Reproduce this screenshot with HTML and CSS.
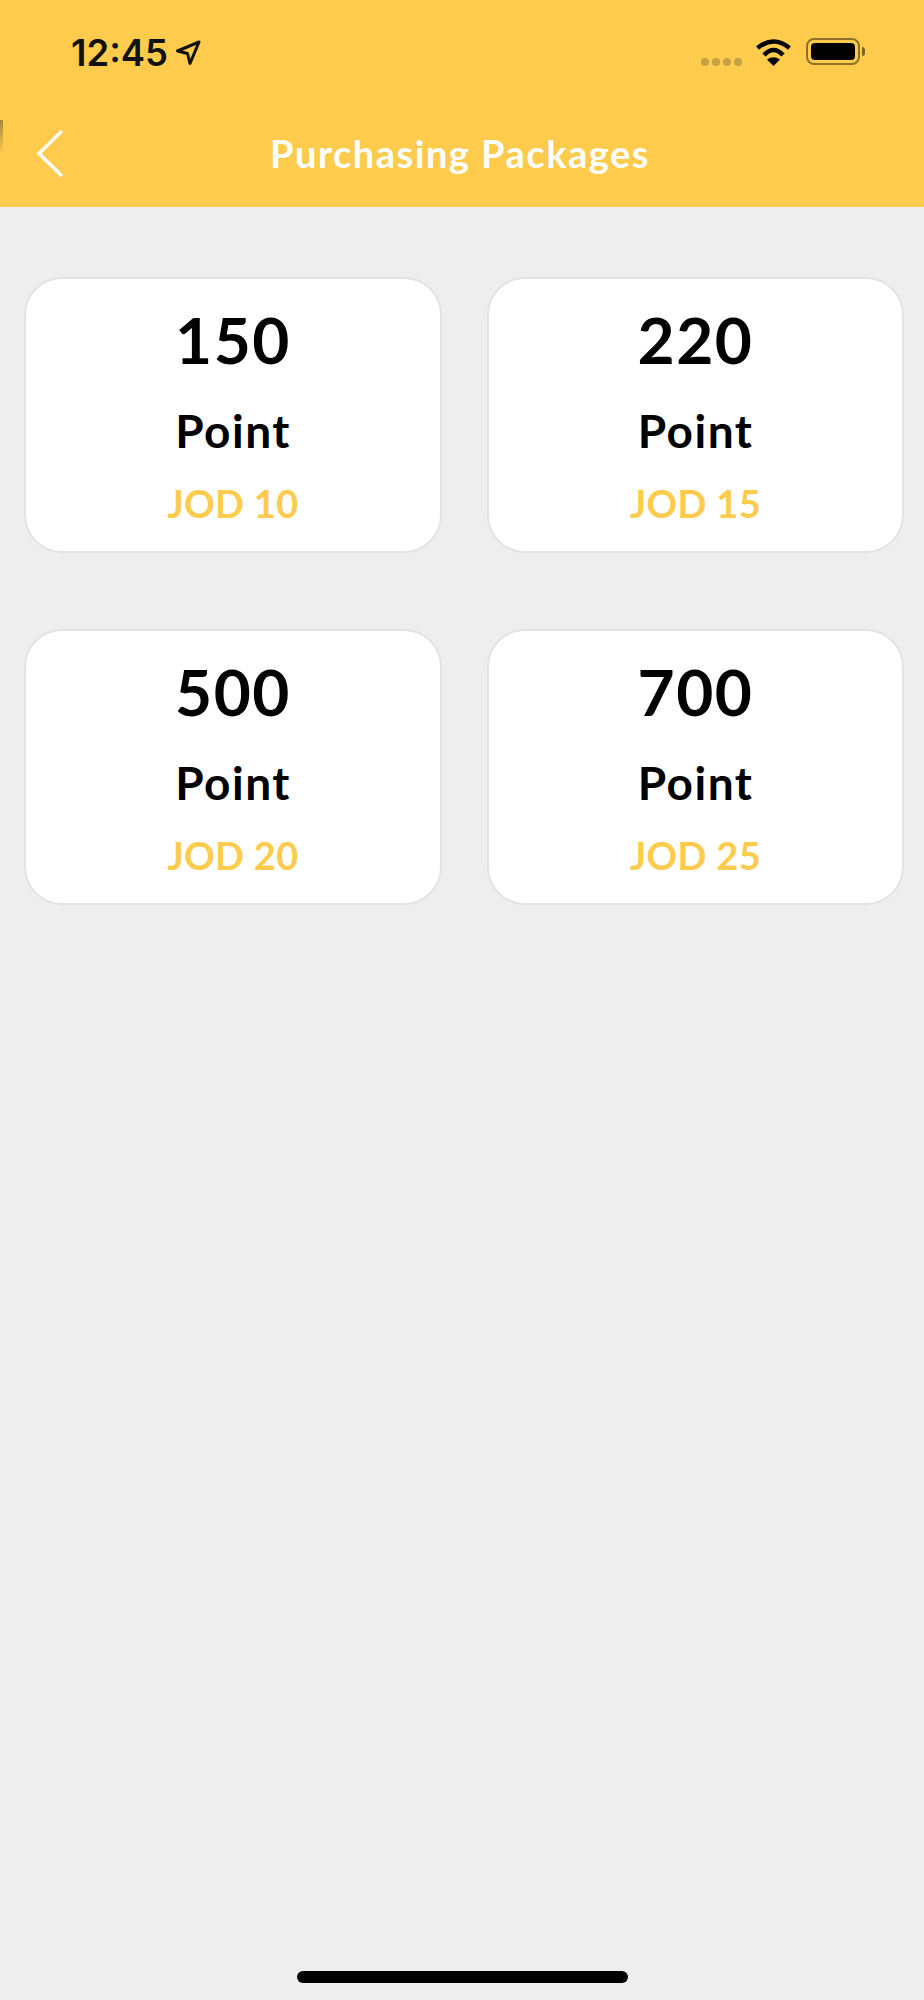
FILE: index.html
```html
<!DOCTYPE html>
<html lang="en">
<head>
    <meta charset="UTF-8">
    <meta name="viewport" content="width=device-width, initial-scale=1.0">
    <title>Purchasing Packages</title>
    <link rel="stylesheet" href="styles.css">
</head>
<body>
    <div class="page">
        <header class="header">
            <div class="status-bar">
                <div class="status-left">
                    <span class="time">12:45</span>
                    <svg class="location" width="26" height="26" viewBox="0 0 26 26">
                        <path d="M24 2 2.500 11 12.500 13.500 15 23.500Z" fill="none" stroke="#111" stroke-width="3" stroke-linejoin="round"/>
                    </svg>
                </div>
                <div class="status-right">
                    <div class="signal">
                        <i></i><i></i><i></i><i></i>
                    </div>
                    <svg class="wifi" width="37" height="28" viewBox="0 0 37 28">
                        <path d="M18.500 28 12 21.500Q18.500 17 25 21.500Z" fill="#000"/>
                        <path d="M9 17Q18.500 7 28 17" fill="none" stroke="#000" stroke-width="4.500"/>
                        <path d="M2.500 10Q18.500 -3 34.500 10" fill="none" stroke="#000" stroke-width="4.500"/>
                    </svg>
                    <div class="battery">
                        <div class="battery-body"><div class="battery-level"></div></div>
                        <div class="battery-cap"></div>
                    </div>
                </div>
            </div>
            <div class="nav-bar">
                <svg class="back" width="30" height="50" viewBox="0 0 30 50">
                    <path d="M27 3 4 25.500 27 48" fill="none" stroke="#fff" stroke-width="3.500"/>
                </svg>
                <h1 class="title">Purchasing Packages</h1>
            </div>
            <div class="edge-mark"></div>
        </header>

        <main class="packages">
            <div class="card">
                <div class="points">150</div>
                <div class="unit">Point</div>
                <div class="price">JOD 10</div>
            </div>
            <div class="card">
                <div class="points">220</div>
                <div class="unit">Point</div>
                <div class="price">JOD 15</div>
            </div>
            <div class="card">
                <div class="points">500</div>
                <div class="unit">Point</div>
                <div class="price">JOD 20</div>
            </div>
            <div class="card">
                <div class="points">700</div>
                <div class="unit">Point</div>
                <div class="price">JOD 25</div>
            </div>
        </main>

        <div class="home-bar"></div>
    </div>
</body>
</html>
```

FILE: styles.css
```css
* {
  box-sizing: border-box;
}
body {
  margin: 0;
  background: #eee;
  font-family: "Lato", "Open Sans", sans-serif;
}
.page {
  height: 2000px;
  display: flex;
  flex-direction: column;
}
.header {
  position: relative;
  height: 207px;
  background: #ffcb4c;
  flex-shrink: 0;
}

/* status bar */
.status-bar {
  height: 102px;
  padding: 30px 59px 0 71px;
  display: flex;
  justify-content: space-between;
  align-items: flex-start;
}
.status-left {
  display: flex;
  align-items: center;
  gap: 7px;
  padding-top: 1px;
}
.time {
  font-family: "Inter", sans-serif;
  font-size: 36.500px;
  font-weight: 600;
  line-height: 44px;
  color: #111;
}
.status-right {
  display: flex;
  align-items: flex-start;
  padding-top: 8px;
}
.signal {
  display: flex;
  gap: 3px;
  margin: 20px 13px 0 0;
}
.signal i {
  width: 8px;
  height: 8px;
  border-radius: 50%;
  background: #c4a145;
}
.wifi {
  margin: 0 14px 0 0;
}
.battery {
  display: flex;
  align-items: center;
  height: 27px;
}
.battery-body {
  width: 54px;
  height: 27px;
  padding: 3px;
  border: 2px solid #8c7229;
  border-radius: 8px;
}
.battery-level {
  height: 100%;
  background: #000;
  border-radius: 4px;
}
.battery-cap {
  width: 3px;
  height: 9px;
  margin-left: 2px;
  background: #7a6427;
  border-radius: 0 3px 3px 0;
}

/* nav */
.nav-bar {
  height: 105px;
  padding: 0 0 3px 35px;
  display: flex;
  align-items: center;
}
.back {
  flex-shrink: 0;
}
.title {
  margin: 0 0 0 205px;
  font-size: 38px;
  font-weight: 700;
  line-height: 46px;
  letter-spacing: 1.500px;
  color: #fff;
}
.edge-mark {
  position: absolute;
  left: 0;
  top: 120px;
  width: 3px;
  height: 34px;
  background: linear-gradient(#a08a40, #ffcb4c);
}

/* packages */
.packages {
  flex: 1;
  padding: 70px 20px 0 24px;
  display: grid;
  grid-template-columns: 418px 417px;
  grid-auto-rows: 276px;
  column-gap: 45px;
  row-gap: 76px;
}
.card {
  background: #fff;
  border: 2px solid #e3e3e3;
  border-radius: 38px;
  display: flex;
  flex-direction: column;
  align-items: center;
  color: #000;
}
.points {
  margin-top: 24px;
  font-size: 64px;
  font-weight: 700;
  line-height: 74px;
  letter-spacing: 1.500px;
}
.unit {
  margin-top: 26px;
  font-size: 46px;
  font-weight: 700;
  line-height: 56px;
  letter-spacing: 1.500px;
}
.price {
  margin-top: 21px;
  font-size: 38px;
  font-weight: 700;
  line-height: 46px;
  letter-spacing: 0.300px;
  color: #ffcb4c;
}

.home-bar {
  width: 331px;
  height: 12px;
  margin: 0 auto 17px;
  background: #000;
  border-radius: 6px;
  flex-shrink: 0;
}
```
